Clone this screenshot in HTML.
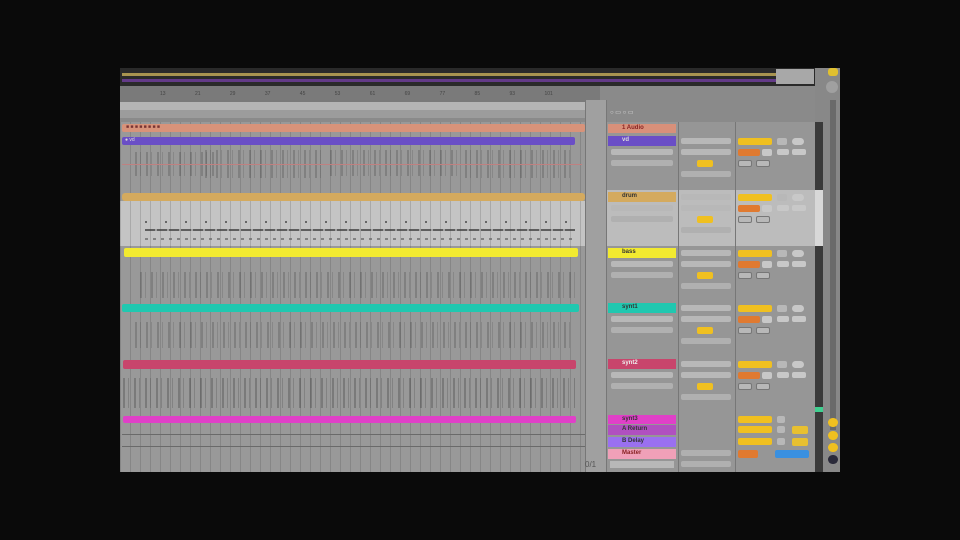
<!DOCTYPE html>
<html><head><meta charset="utf-8"><style>
*{margin:0;padding:0;box-sizing:border-box}
body{width:960px;height:540px;background:#0a0a0a;position:relative;overflow:hidden;font-family:"Liberation Sans",sans-serif;font-size:6px}
.a{position:absolute}
.notes{background:
 repeating-linear-gradient(90deg,rgba(40,40,40,.55) 0 2px,transparent 2px 5px,rgba(40,40,40,.4) 5px 6px,transparent 6px 11px);
}
.grid{background-image:repeating-linear-gradient(90deg,rgba(60,60,60,.2) 0 1px,transparent 1px 10px)}
.hdr{font-weight:bold;font-size:6px;padding-left:14px;line-height:9px;color:#333}
.btn{position:absolute;border-radius:2px}
</style></head><body>
<div class="a" style="left:120px;top:68px;width:720px;height:404px;background:#8a8a8a"></div>
<div class="a" style="left:120px;top:68px;width:695px;height:18px;background:#2a2a2a"></div>
<div class="a" style="left:122px;top:73px;width:660px;height:3px;background:#a89450"></div>
<div class="a" style="left:122px;top:79px;width:660px;height:3px;background:#633a88"></div>
<div class="a" style="left:776px;top:69px;width:38px;height:15px;background:#a8a8a8"></div>
<div class="a" style="left:815px;top:68px;width:25px;height:404px;background:#888"></div>
<div class="a" style="left:828px;top:68px;width:10px;height:8px;background:#e0c030;border-radius:3px"></div>
<div class="a" style="left:826px;top:81px;width:12px;height:12px;background:#a0a0a0;border-radius:6px"></div>
<div class="a" style="left:830px;top:100px;width:6px;height:330px;background:#6a6a6a"></div>
<div class="a" style="left:120px;top:86px;width:480px;height:16px;background:#7a7a7a;color:#444;font-size:5px;line-height:16px;word-spacing:28px;padding-left:40px">13 21 29 37 45 53 61 69 77 85 93 101</div>
<div class="a" style="left:120px;top:102px;width:465px;height:8px;background:#b5b5b5"></div>
<div class="a" style="left:120px;top:110px;width:465px;height:8px;background:#9c9c9c"></div>
<div class="a" style="left:585px;top:100px;width:22px;height:372px;background:#a0a0a0;border-left:1px solid #777;border-right:1px solid #777"></div>
<div class="a" style="left:610px;top:109px;width:60px;height:7px;color:#ddd;font-size:6px">○ ▭ ○ ▭</div>
<div class="a grid" style="left:120px;top:122px;width:465px;height:350px;background-color:#999"></div>
<div class="a" style="left:122px;top:124px;width:463px;height:8px;background:#d8937a;border-radius:2px;font-size:5px;color:#733;padding-left:4px">■ ■ ■ ■ ■ ■ ■ ■</div>
<div class="a" style="left:122px;top:137px;width:453px;height:8px;background:#6a4ec6;border-radius:2px;color:#ddd;font-size:5px;padding-left:3px">● vd</div>
<div class="a notes" style="left:135px;top:152px;width:80px;height:24px;opacity:.4"></div>
<div class="a notes" style="left:205px;top:150px;width:120px;height:28px;opacity:.4"></div>
<div class="a notes" style="left:330px;top:150px;width:130px;height:26px;opacity:.4"></div>
<div class="a notes" style="left:465px;top:150px;width:110px;height:28px;opacity:.4"></div>
<div class="a" style="left:122px;top:164px;width:460px;height:1px;background:#c08080"></div>
<div class="a" style="left:122px;top:193px;width:463px;height:8px;background:#d4aa5e;border-radius:3px"></div>
<div class="a grid" style="left:120px;top:201px;width:465px;height:45px;background-color:#c4c4c4"></div>
<div class="a" style="left:145px;top:229px;width:430px;height:2px;background:repeating-linear-gradient(90deg,#444 0 10px,#999 10px 12px);opacity:.8"></div>
<div class="a" style="left:145px;top:238px;width:430px;height:2px;background:repeating-linear-gradient(90deg,#666 0 3px,transparent 3px 8px);opacity:.7"></div>
<div class="a" style="left:145px;top:221px;width:430px;height:2px;background:repeating-linear-gradient(90deg,#666 0 2px,transparent 2px 20px)"></div>
<div class="a" style="left:124px;top:248px;width:454px;height:9px;background:#f2ea30;border-radius:2px"></div>
<div class="a notes" style="left:140px;top:272px;width:435px;height:26px;opacity:.4"></div>
<div class="a" style="left:122px;top:304px;width:457px;height:8px;background:#20c8b0;border-radius:2px"></div>
<div class="a notes" style="left:135px;top:322px;width:440px;height:26px;opacity:.4"></div>
<div class="a" style="left:123px;top:360px;width:453px;height:9px;background:#c8456c;border-radius:2px"></div>
<div class="a notes" style="left:123px;top:378px;width:452px;height:30px;opacity:.5"></div>
<div class="a" style="left:123px;top:416px;width:453px;height:7px;background:#e040c8;border-radius:2px"></div>
<div class="a" style="left:122px;top:434px;width:463px;height:1px;background:#6a6a6a"></div>
<div class="a" style="left:122px;top:446px;width:463px;height:1px;background:#6a6a6a"></div>
<div class="a" style="left:585px;top:460px;width:20px;height:10px;color:#555;font-size:8px">0/1</div>
<div class="a" style="left:607px;top:122px;width:208px;height:350px;background:#969696"></div>
<div class="a" style="left:607px;top:190px;width:208px;height:56px;background:#bcbcbc"></div>
<div class="a" style="left:678px;top:122px;width:1px;height:350px;background:#777"></div>
<div class="a" style="left:735px;top:122px;width:1px;height:350px;background:#777"></div>
<div class="a hdr" style="left:608px;top:124px;width:68px;height:9px;background:#d8907a;color:#822">1 Audio</div>
<div class="a hdr" style="left:608px;top:136px;width:68px;height:10px;background:#6a4ec6;color:#ddd">vd</div>
<div class="a hdr" style="left:608px;top:192px;width:68px;height:10px;background:#d4aa5e">drum</div>
<div class="a hdr" style="left:608px;top:248px;width:68px;height:10px;background:#f2ea30">bass</div>
<div class="a hdr" style="left:608px;top:303px;width:68px;height:10px;background:#20c8b0">synt1</div>
<div class="a hdr" style="left:608px;top:359px;width:68px;height:10px;background:#c8456c;color:#eee">synt2</div>
<div class="a hdr" style="left:608px;top:415px;width:68px;height:9px;background:#e040c8">synt3</div>
<div class="a hdr" style="left:608px;top:425px;width:68px;height:10px;background:#b050c0">A Return</div>
<div class="a hdr" style="left:608px;top:437px;width:68px;height:10px;background:#9a70f0">B Delay</div>
<div class="a hdr" style="left:608px;top:449px;width:68px;height:10px;background:#f0a0b8;color:#822">Master</div>
<div class="a" style="left:610px;top:461px;width:64px;height:7px;background:#b8b8b8"></div>
<div id="ctl"></div>
<script>
var tops=[136,192,248,303,359];
var h='';
tops.forEach(function(t,i){
 h+='<div class="btn" style="left:611px;top:'+(t+13)+'px;width:62px;height:6px;background:#b8b8b8"></div>';
 h+='<div class="btn" style="left:611px;top:'+(t+24)+'px;width:62px;height:6px;background:#b0b0b0"></div>';
 h+='<div class="btn" style="left:681px;top:'+(t+2)+'px;width:50px;height:6px;background:#b8b8b8"></div>';
 h+='<div class="btn" style="left:681px;top:'+(t+13)+'px;width:50px;height:6px;background:#b8b8b8"></div>';
 h+='<div class="btn" style="left:697px;top:'+(t+24)+'px;width:16px;height:7px;background:#f0c020"></div>';
 h+='<div class="btn" style="left:681px;top:'+(t+35)+'px;width:50px;height:6px;background:#b0b0b0"></div>';
 h+='<div class="btn" style="left:738px;top:'+(t+2)+'px;width:34px;height:7px;background:#f0c020"></div>';
 h+='<div class="btn" style="left:738px;top:'+(t+13)+'px;width:22px;height:7px;background:#e07a30"></div>';
 h+='<div class="btn" style="left:762px;top:'+(t+13)+'px;width:10px;height:7px;background:#c8c8c8"></div>';
 h+='<div class="btn" style="left:738px;top:'+(t+24)+'px;width:14px;height:7px;background:#b8b8b8;border:1px solid #777"></div>';
 h+='<div class="btn" style="left:756px;top:'+(t+24)+'px;width:14px;height:7px;background:#b8b8b8;border:1px solid #777"></div>';
 h+='<div class="btn" style="left:777px;top:'+(t+2)+'px;width:10px;height:7px;background:#b8b8b8"></div>';
 h+='<div class="btn" style="left:792px;top:'+(t+2)+'px;width:12px;height:7px;background:#c8c8c8;border-radius:4px"></div>';
 h+='<div class="btn" style="left:777px;top:'+(t+13)+'px;width:12px;height:6px;background:#c8c8c8"></div>';
 h+='<div class="btn" style="left:792px;top:'+(t+13)+'px;width:14px;height:6px;background:#c8c8c8"></div>';
});
[416,426,438].forEach(function(t,i){
 h+='<div class="btn" style="left:738px;top:'+t+'px;width:34px;height:7px;background:#f0c020"></div>';
 h+='<div class="btn" style="left:777px;top:'+t+'px;width:8px;height:7px;background:#b8b8b8"></div>';
 if(i>0)h+='<div class="btn" style="left:792px;top:'+t+'px;width:16px;height:8px;background:#e8c030"></div>';
});
h+='<div class="btn" style="left:738px;top:450px;width:20px;height:8px;background:#e07a30"></div>';
h+='<div class="btn" style="left:775px;top:450px;width:34px;height:8px;background:#3a90e0"></div>';
h+='<div class="btn" style="left:681px;top:450px;width:50px;height:6px;background:#b0b0b0"></div>';
h+='<div class="btn" style="left:681px;top:461px;width:50px;height:6px;background:#b0b0b0"></div>';
document.getElementById('ctl').innerHTML=h;
</script>
<div class="a" style="left:815px;top:122px;width:8px;height:350px;background:#3a3a3a"></div>
<div class="a" style="left:815px;top:190px;width:8px;height:56px;background:#d8d8d8"></div>
<div class="a" style="left:815px;top:407px;width:8px;height:5px;background:#40d090"></div>
<div class="a" style="left:828px;top:418px;width:10px;height:9px;background:#f0c020;border-radius:5px"></div>
<div class="a" style="left:828px;top:431px;width:10px;height:9px;background:#f0c020;border-radius:5px"></div>
<div class="a" style="left:828px;top:443px;width:10px;height:9px;background:#f0c020;border-radius:5px"></div>
<div class="a" style="left:828px;top:455px;width:10px;height:9px;background:#2a2a3a;border-radius:5px"></div>
</body></html>
